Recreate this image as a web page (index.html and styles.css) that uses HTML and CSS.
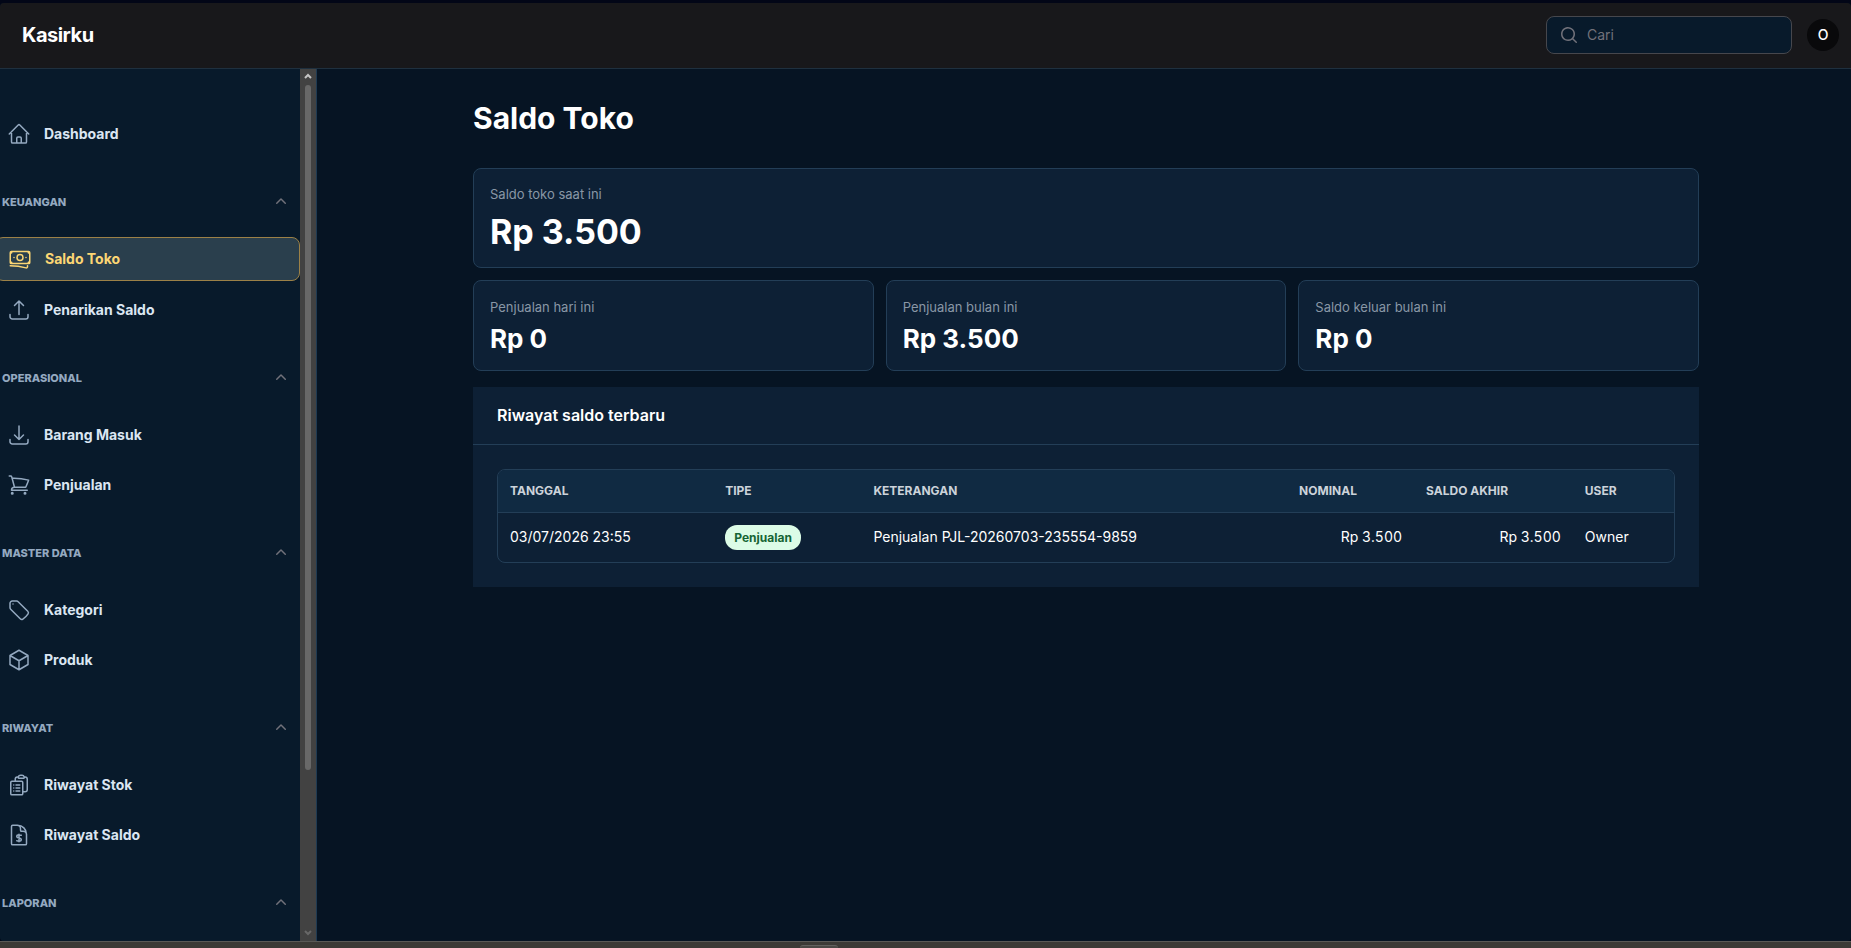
FILE: index.html
```html
<!DOCTYPE html>
<html lang="id">
<head>
    <meta charset="UTF-8">
    <meta name="viewport" content="width=device-width, initial-scale=1.0">
    <title>Saldo Toko - Kasirku</title>
    <link rel="stylesheet" href="styles.css">
</head>
<body>
    <div class="app">
        <header class="topbar">
            <a class="brand" href="#">Kasirku</a>
            <div class="topbar-right">
                <label class="search">
                    <svg class="search-icon" viewBox="0 0 20 20" aria-hidden="true"><path fill-rule="evenodd" d="M9 3.5a5.5 5.5 0 1 0 0 11 5.5 5.5 0 0 0 0-11ZM2 9a7 7 0 1 1 12.452 4.391l3.328 3.329a.75.75 0 1 1-1.06 1.06l-3.329-3.328A7 7 0 0 1 2 9Z"/></svg>
                    <input type="search" placeholder="Cari" aria-label="Cari">
                </label>
                <button class="avatar" type="button">O</button>
            </div>
        </header>

        <div class="layout">
            <aside class="sidebar">
                <nav class="nav">
                    <a class="nav-item" href="#">
                        <svg class="icon" viewBox="0 0 24 24"><path d="m2.25 12 8.954-8.955c.44-.439 1.152-.439 1.591 0L21.75 12M4.5 9.75v10.125c0 .621.504 1.125 1.125 1.125H9.75v-4.875c0-.621.504-1.125 1.125-1.125h2.25c.621 0 1.125.504 1.125 1.125V21h4.125c.621 0 1.125-.504 1.125-1.125V9.75M8.25 21h8.25"/></svg>
                        Dashboard
                    </a>

                    <section class="nav-group">
                        <button class="nav-label" type="button">KEUANGAN
                            <svg class="chevron" viewBox="0 0 20 20"><path d="M9.47 6.47a.75.75 0 0 1 1.06 0l4.25 4.25a.75.75 0 1 1-1.06 1.06L10 8.06l-3.72 3.72a.75.75 0 0 1-1.06-1.06l4.25-4.25Z"/></svg>
                        </button>
                        <div class="nav-items">
                            <a class="nav-item active" href="#">
                                <svg class="icon" viewBox="0 0 24 24"><path d="M2.25 18.75a60.07 60.07 0 0 1 15.797 2.101c.727.198 1.453-.342 1.453-1.096V18.75M3.75 4.5v.75A.75.75 0 0 1 3 6h-.75m0 0v-.375c0-.621.504-1.125 1.125-1.125H20.25M2.25 6v9m18-10.5v.75c0 .414.336.75.75.75h.75m-1.5-1.5h.375c.621 0 1.125.504 1.125 1.125v9.75c0 .621-.504 1.125-1.125 1.125h-.375m1.5-1.5H21a.75.75 0 0 0-.75.75v.75m0 0H3.75m0 0h-.375a1.125 1.125 0 0 1-1.125-1.125V15m1.5 1.5v-.75A.75.75 0 0 0 3 15h-.75M15 10.5a3 3 0 1 1-6 0 3 3 0 0 1 6 0Zm3 0h.008v.008H18V10.5Zm-12 0h.008v.008H6V10.5Z"/></svg>
                                Saldo Toko
                            </a>
                            <a class="nav-item" href="#">
                                <svg class="icon" viewBox="0 0 24 24"><path d="M3 16.5v2.25A2.25 2.25 0 0 0 5.25 21h13.5A2.25 2.25 0 0 0 21 18.75V16.5m-13.5-9L12 3m0 0 4.5 4.5M12 3v13.5"/></svg>
                                Penarikan Saldo
                            </a>
                        </div>
                    </section>

                    <section class="nav-group">
                        <button class="nav-label" type="button">OPERASIONAL
                            <svg class="chevron" viewBox="0 0 20 20"><path d="M9.47 6.47a.75.75 0 0 1 1.06 0l4.25 4.25a.75.75 0 1 1-1.06 1.06L10 8.06l-3.72 3.72a.75.75 0 0 1-1.06-1.06l4.25-4.25Z"/></svg>
                        </button>
                        <div class="nav-items">
                            <a class="nav-item" href="#">
                                <svg class="icon" viewBox="0 0 24 24"><path d="M3 16.5v2.25A2.25 2.25 0 0 0 5.25 21h13.5A2.25 2.25 0 0 0 21 18.75V16.5M16.5 12 12 16.5m0 0L7.5 12m4.5 4.5V3"/></svg>
                                Barang Masuk
                            </a>
                            <a class="nav-item" href="#">
                                <svg class="icon" viewBox="0 0 24 24"><path d="M2.25 3h1.386c.51 0 .955.343 1.087.835l.383 1.437M7.5 14.25a3 3 0 0 0-3 3h15.75m-12.75-3h11.218c1.121-2.3 2.1-4.684 2.924-7.138a60.114 60.114 0 0 0-16.536-1.84M7.5 14.25 5.106 5.272M6 20.25a.75.75 0 1 1-1.5 0 .75.75 0 0 1 1.5 0Zm12.75 0a.75.75 0 1 1-1.5 0 .75.75 0 0 1 1.5 0Z"/></svg>
                                Penjualan
                            </a>
                        </div>
                    </section>

                    <section class="nav-group">
                        <button class="nav-label" type="button">MASTER DATA
                            <svg class="chevron" viewBox="0 0 20 20"><path d="M9.47 6.47a.75.75 0 0 1 1.06 0l4.25 4.25a.75.75 0 1 1-1.06 1.06L10 8.06l-3.72 3.72a.75.75 0 0 1-1.06-1.06l4.25-4.25Z"/></svg>
                        </button>
                        <div class="nav-items">
                            <a class="nav-item" href="#">
                                <svg class="icon" viewBox="0 0 24 24"><path d="M9.568 3H5.25A2.25 2.25 0 0 0 3 5.25v4.318c0 .597.237 1.17.659 1.591l9.581 9.581c.699.699 1.78.872 2.607.33a18.095 18.095 0 0 0 5.223-5.223c.542-.827.369-1.908-.33-2.607L11.16 3.66A2.25 2.25 0 0 0 9.568 3Z"/><path d="M6 6h.008v.008H6V6Z"/></svg>
                                Kategori
                            </a>
                            <a class="nav-item" href="#">
                                <svg class="icon" viewBox="0 0 24 24"><path d="m21 7.5-9-5.25L3 7.5m18 0-9 5.25m9-5.25v9l-9 5.25M3 7.5l9 5.25M3 7.5v9l9 5.25m0-9v9"/></svg>
                                Produk
                            </a>
                        </div>
                    </section>

                    <section class="nav-group">
                        <button class="nav-label" type="button">RIWAYAT
                            <svg class="chevron" viewBox="0 0 20 20"><path d="M9.47 6.47a.75.75 0 0 1 1.06 0l4.25 4.25a.75.75 0 1 1-1.06 1.06L10 8.06l-3.72 3.72a.75.75 0 0 1-1.06-1.06l4.25-4.25Z"/></svg>
                        </button>
                        <div class="nav-items">
                            <a class="nav-item" href="#">
                                <svg class="icon" viewBox="0 0 24 24"><path d="M9 12h3.75M9 15h3.75M9 18h3.75m3 .75H18a2.25 2.25 0 0 0 2.25-2.25V6.108c0-1.135-.845-2.098-1.976-2.192a48.424 48.424 0 0 0-1.123-.08m-5.801 0c-.065.21-.1.433-.1.664 0 .414.336.75.75.75h4.5a.75.75 0 0 0 .75-.75 2.25 2.25 0 0 0-.1-.664m-5.8 0A2.251 2.251 0 0 1 13.5 2.25H15c1.012 0 1.867.668 2.15 1.586m-5.8 0c-.376.023-.75.05-1.124.08C9.095 4.01 8.25 4.973 8.25 6.108V8.25m0 0H4.875c-.621 0-1.125.504-1.125 1.125v11.25c0 .621.504 1.125 1.125 1.125h9.75c.621 0 1.125-.504 1.125-1.125V9.375c0-.621-.504-1.125-1.125-1.125H8.25ZM6.75 12h.008v.008H6.75V12Zm0 3h.008v.008H6.75V15Zm0 3h.008v.008H6.75V18Z"/></svg>
                                Riwayat Stok
                            </a>
                            <a class="nav-item" href="#">
                                <svg class="icon" viewBox="0 0 24 24"><path d="M19.5 14.25v-2.625a3.375 3.375 0 0 0-3.375-3.375h-1.5A1.125 1.125 0 0 1 13.5 7.125v-1.5a3.375 3.375 0 0 0-3.375-3.375H8.25m3.75 9v7.5m2.25-6.466a9.016 9.016 0 0 0-3.461-.203c-.536.072-.974.478-1.021 1.017a4.559 4.559 0 0 0-.018.402c0 .464.336.844.775.994l2.95 1.012c.44.15.775.53.775.994 0 .136-.006.27-.018.402-.047.539-.485.945-1.021 1.017a9.077 9.077 0 0 1-3.461-.203M10.5 2.25H5.625c-.621 0-1.125.504-1.125 1.125v17.25c0 .621.504 1.125 1.125 1.125h12.75c.621 0 1.125-.504 1.125-1.125V11.25a9 9 0 0 0-9-9Z"/></svg>
                                Riwayat Saldo
                            </a>
                        </div>
                    </section>

                    <section class="nav-group">
                        <button class="nav-label" type="button">LAPORAN
                            <svg class="chevron" viewBox="0 0 20 20"><path d="M9.47 6.47a.75.75 0 0 1 1.06 0l4.25 4.25a.75.75 0 1 1-1.06 1.06L10 8.06l-3.72 3.72a.75.75 0 0 1-1.06-1.06l4.25-4.25Z"/></svg>
                        </button>
                    </section>
                </nav>
                <div class="scrollbar" aria-hidden="true">
                    <svg class="scroll-arrow" viewBox="0 0 16 16"><path d="m5 9 3-3 3 3"/></svg>
                    <div class="scroll-track"><div class="scroll-thumb"></div></div>
                    <svg class="scroll-arrow dim" viewBox="0 0 16 16"><path d="m5 6 3 3 3-3"/></svg>
                </div>
            </aside>

            <main class="main">
                <div class="content">
                    <h1>Saldo Toko</h1>

                    <div class="card card-main">
                        <p class="card-label">Saldo toko saat ini</p>
                        <p class="card-value">Rp 3.500</p>
                    </div>

                    <div class="stats">
                        <div class="card">
                            <p class="card-label">Penjualan hari ini</p>
                            <p class="card-value">Rp 0</p>
                        </div>
                        <div class="card">
                            <p class="card-label">Penjualan bulan ini</p>
                            <p class="card-value">Rp 3.500</p>
                        </div>
                        <div class="card">
                            <p class="card-label">Saldo keluar bulan ini</p>
                            <p class="card-value">Rp 0</p>
                        </div>
                    </div>

                    <section class="history">
                        <h2>Riwayat saldo terbaru</h2>
                        <div class="history-body">
                            <div class="table-wrap">
                                <table>
                                    <thead>
                                        <tr>
                                            <th class="col-date">TANGGAL</th>
                                            <th class="col-type">TIPE</th>
                                            <th class="col-note">KETERANGAN</th>
                                            <th class="col-nominal">NOMINAL</th>
                                            <th class="col-balance">SALDO AKHIR</th>
                                            <th>USER</th>
                                        </tr>
                                    </thead>
                                    <tbody>
                                        <tr>
                                            <td>03/07/2026 23:55</td>
                                            <td><span class="badge">Penjualan</span></td>
                                            <td>Penjualan PJL-20260703-235554-9859</td>
                                            <td class="num">Rp 3.500</td>
                                            <td class="num">Rp 3.500</td>
                                            <td>Owner</td>
                                        </tr>
                                    </tbody>
                                </table>
                            </div>
                        </div>
                    </section>
                </div>
            </main>
        </div>
    </div>
    <footer class="taskbar"><div class="taskbar-tab"></div></footer>
</body>
</html>
```

FILE: styles.css
```css
* {
    box-sizing: border-box;
}
body {
    margin: 0;
    height: 100vh;
    display: flex;
    flex-direction: column;
    padding-top: 3px;
    overflow: hidden;
    background: #020617;
    color: #fff;
    font-family: Inter, "Liberation Sans", sans-serif;
    font-size: 14px;
    line-height: 20px;
}
h1, h2, p {
    margin: 0;
}
a {
    color: inherit;
    text-decoration: none;
}
button {
    font: inherit;
    color: inherit;
    border: 0;
    padding: 0;
    cursor: pointer;
}
.app {
    flex: 1;
    min-height: 0;
    display: flex;
    flex-direction: column;
    border-radius: 4px;
    overflow: hidden;
    background: #061423;
}

/* top bar */
.topbar {
    height: 66px;
    flex-shrink: 0;
    display: flex;
    align-items: center;
    justify-content: space-between;
    padding: 0 12px 1px 22px;
    background: #18181b;
    border-bottom: 1px solid #1f303f;
}
.brand {
    font-size: 20px;
    line-height: 28px;
    font-weight: 700;
    letter-spacing: -0.025em;
}
.topbar-right {
    display: flex;
    align-items: center;
    gap: 15px;
}
.search {
    display: flex;
    align-items: center;
    gap: 8px;
    width: 246px;
    height: 38px;
    padding: 0 12px;
    background: #081a2b;
    border: 1px solid #46474d;
    border-radius: 8px;
}
.search-icon {
    width: 20px;
    height: 20px;
    flex-shrink: 0;
    fill: #71717a;
}
.search input {
    flex: 1;
    min-width: 0;
    padding: 0;
    border: 0;
    outline: 0;
    background: transparent;
    color: #fff;
    font: inherit;
}
.search input::placeholder {
    color: #71717a;
}
.avatar {
    width: 32px;
    height: 32px;
    border-radius: 50%;
    background: #09090b;
    font-weight: 500;
}

/* sidebar */
.layout {
    flex: 1;
    min-height: 0;
    display: flex;
}
.sidebar {
    width: 317px;
    flex-shrink: 0;
    display: flex;
    background: #081a2b;
    border-right: 1px solid #1f3a52;
}
.nav {
    flex: 1;
    display: flex;
    flex-direction: column;
    gap: 35px;
    padding-top: 43px;
    overflow: hidden;
}
.nav-group {
    display: flex;
    flex-direction: column;
    gap: 23px;
}
.nav-label {
    display: flex;
    align-items: center;
    justify-content: space-between;
    height: 24px;
    padding: 0 9px 0 2px;
    background: none;
    color: #94a9c0;
    font-size: 11px;
    font-weight: 800;
}
.chevron {
    width: 20px;
    height: 20px;
    fill: #71717a;
}
.nav-items {
    display: flex;
    flex-direction: column;
    gap: 7px;
}
.nav-item {
    display: flex;
    align-items: center;
    gap: 13px;
    height: 43px;
    flex-shrink: 0;
    padding: 0 7px;
    color: #dbe6f2;
    font-weight: 700;
}
.icon {
    width: 24px;
    height: 24px;
    flex-shrink: 0;
    fill: none;
    stroke: #94a9c0;
    stroke-width: 1.5;
    stroke-linecap: round;
    stroke-linejoin: round;
}
.nav-item.active {
    height: 44px;
    margin-left: -5px;
    padding-left: 12px;
    background: #2a3f4d;
    border: 1px solid #9c8147;
    border-radius: 8px;
    color: #fcd674;
}
.nav-item.active .icon {
    stroke: #fcd674;
}
.scrollbar {
    width: 16px;
    display: flex;
    flex-direction: column;
    background: #424242;
}
.scroll-arrow {
    width: 16px;
    height: 16px;
    fill: none;
    stroke: #c4c4c4;
    stroke-width: 2;
}
.scroll-arrow.dim {
    stroke: #686868;
}
.scroll-track {
    flex: 1;
    display: flex;
    justify-content: center;
}
.scroll-thumb {
    width: 6px;
    height: calc(100% - 155px);
    border-radius: 3px;
    background: #686868;
}

/* main content */
.main {
    flex: 1;
    padding: 31px 0 0 4px;
}
.content {
    max-width: 1226px;
    margin: 0 auto;
}
h1 {
    margin-bottom: 32px;
    font-size: 30px;
    line-height: 36px;
    font-weight: 700;
}
.card {
    padding: 16px 16px 15px;
    background: #0d2035;
    border: 1px solid #233e57;
    border-radius: 8px;
}
.card-label {
    color: #8997a6;
    font-size: 13px;
    line-height: 20px;
}
.card-value {
    margin-top: 6px;
    font-size: 26px;
    line-height: 32px;
    font-weight: 700;
}
.card-main {
    padding: 15px 16px;
    margin-bottom: 12px;
}
.card-main .card-value {
    margin-top: 8px;
    font-size: 34px;
    line-height: 40px;
}
.stats {
    display: grid;
    grid-template-columns: repeat(3, 1fr);
    gap: 12px;
    margin-bottom: 16px;
}
.history {
    background: #0d2035;
}
.history h2 {
    padding: 16px 24px 17px;
    border-bottom: 1px solid #233e57;
    font-size: 16px;
    line-height: 24px;
    font-weight: 600;
}
.history-body {
    padding: 24px;
}
.table-wrap {
    border: 1px solid #233e57;
    border-radius: 8px;
    overflow: hidden;
}
table {
    width: 100%;
    table-layout: fixed;
    border-collapse: collapse;
}
th {
    padding: 11px 12px;
    background: #102a42;
    border-bottom: 1px solid #233e57;
    color: #ccd3da;
    font-size: 12px;
    font-weight: 700;
    text-align: left;
}
td {
    padding: 12px;
    vertical-align: baseline;
}
.num {
    text-align: right;
    font-variant-numeric: tabular-nums;
}
.col-date { width: 18.3%; }
.col-type { width: 12.6%; }
.col-note { width: 36.2%; }
.col-nominal { width: 10.8%; }
.col-balance { width: 13.5%; }
.badge {
    display: inline-block;
    padding: 2px 9px;
    border-radius: 12px;
    background: #dcfce7;
    color: #166534;
    font-size: 12px;
    line-height: 21px;
    font-weight: 700;
}

/* strip under the window */
.taskbar {
    height: 7px;
    flex-shrink: 0;
    display: flex;
    padding: 3px 0 0 43.2%;
    background: #3c3a36;
    border-top: 1px solid #5a5956;
}
.taskbar-tab {
    width: 38px;
    border-top: 1px solid #62615e;
    border-radius: 4px 4px 0 0;
    background: #4a4845;
}
```
